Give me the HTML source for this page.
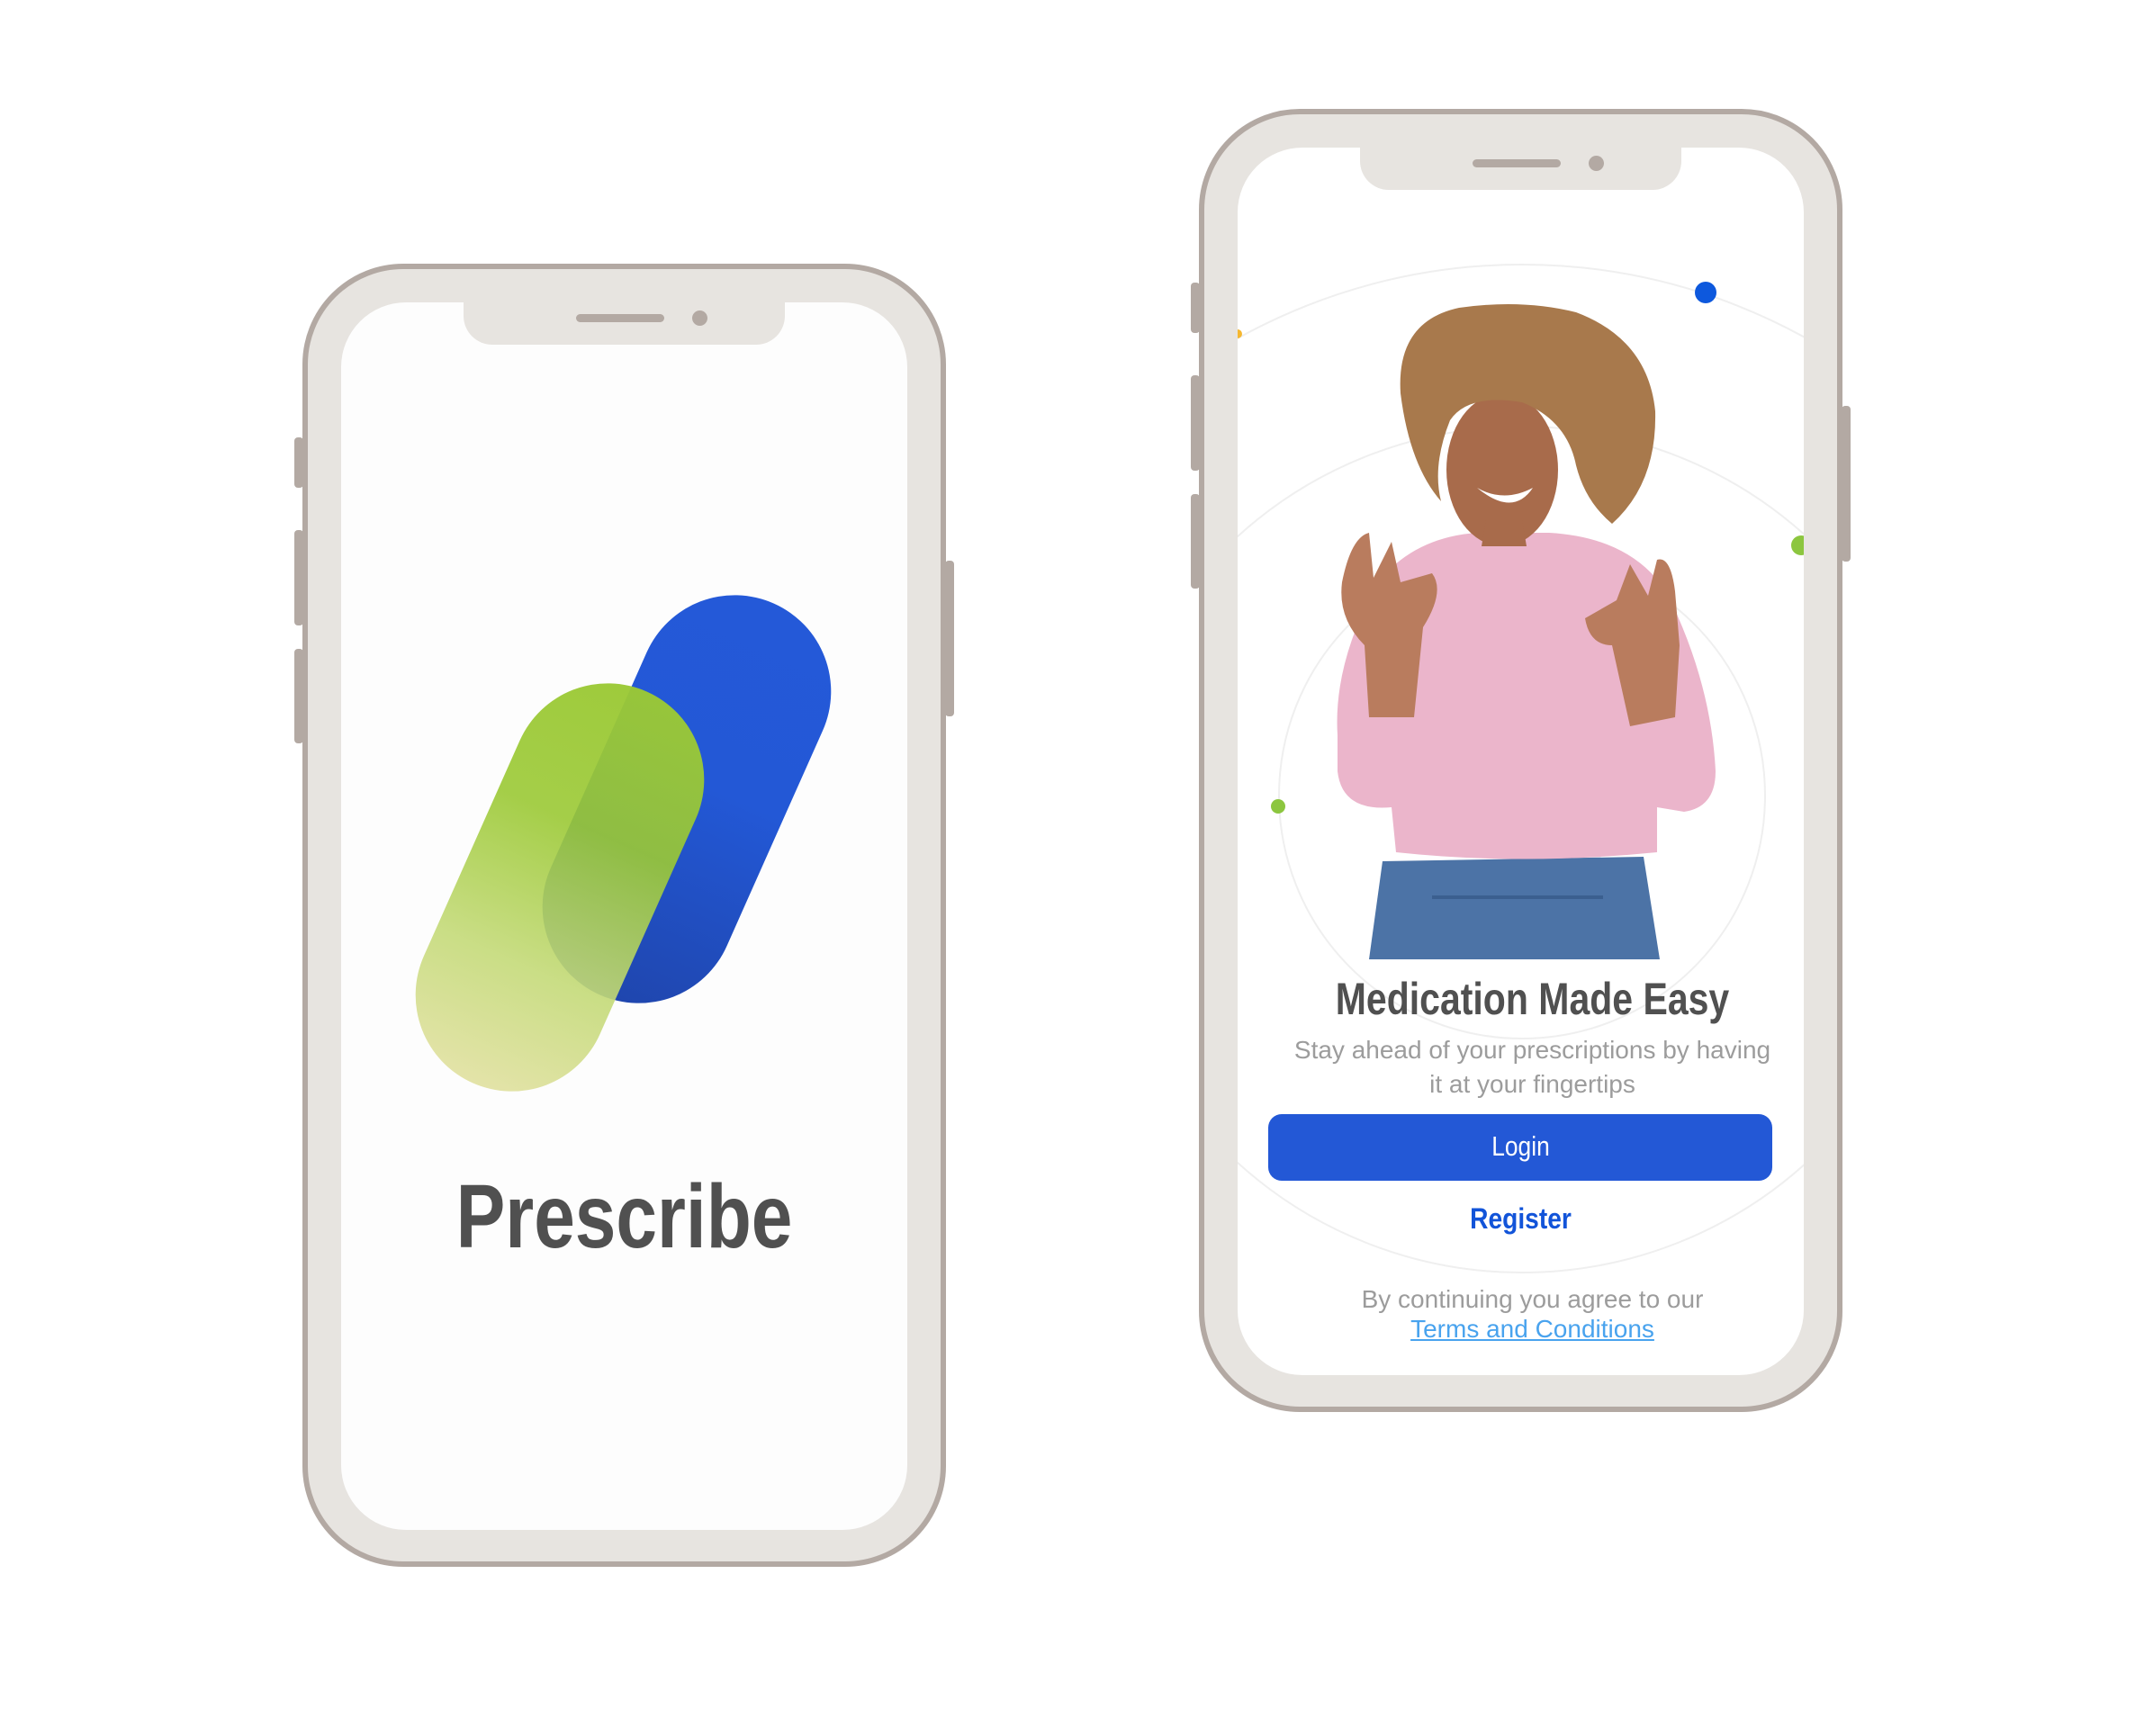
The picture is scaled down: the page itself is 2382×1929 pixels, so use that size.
<!DOCTYPE html>
<html><head><meta charset="utf-8"><style>
*{margin:0;padding:0;box-sizing:border-box}
body{width:2382px;height:1929px;background:#fff;position:relative;overflow:hidden;font-family:"Liberation Sans",sans-serif}
.abs{position:absolute}
.phone{position:absolute;width:715px;height:1448px;border:6px solid #B3A9A3;border-radius:112px;background:#E7E4E0}
.screen{position:absolute;left:37px;top:37px;width:629px;height:1364px;border-radius:72px;background:#FDFDFD;overflow:hidden}
.notch{position:absolute;left:136px;top:0;width:357px;height:47px;background:#E7E4E0;border-radius:0 0 32px 32px}
.spk{position:absolute;left:125px;top:13px;width:98px;height:9px;border-radius:5px;background:#B3A9A3}
.cam{position:absolute;left:254px;top:9px;width:17px;height:17px;border-radius:50%;background:#B3A9A3}
.btn{position:absolute;width:10px;background:#B3A9A3;border-radius:4px}
.t{position:absolute;left:0;width:629px;text-align:center;white-space:nowrap}
</style></head><body>

<div class="btn" style="left:327px;top:486px;height:56px"></div>
<div class="btn" style="left:327px;top:589px;height:106px"></div>
<div class="btn" style="left:327px;top:721px;height:105px"></div>
<div class="btn" style="left:1050px;top:623px;height:173px"></div>
<div class="phone" style="left:336px;top:293px">
  <div class="screen">
    <div class="notch"><div class="spk"></div><div class="cam"></div></div>
  </div>
</div>
<div class="abs" style="left:656px;top:650px;width:214px;height:476px;border-radius:107px;background:linear-gradient(180deg,#2459D8 0%,#2358D6 45%,#1F46AE 100%);transform:rotate(24deg)"></div>
<div class="abs" style="left:515px;top:748px;width:214px;height:476px;border-radius:107px;background:linear-gradient(180deg,rgba(155,201,53,0.97) 0%,rgba(155,201,53,0.9) 35%,rgba(196,218,120,0.9) 70%,rgba(226,226,164,0.95) 100%);transform:rotate(24deg)"></div>
<div class="abs" style="left:336px;top:1297px;width:715px;text-align:center;font-weight:bold;font-size:100px;color:#505050;transform:scaleX(0.82);line-height:110px">Prescribe</div>

<div class="btn" style="left:1323px;top:314px;height:56px"></div>
<div class="btn" style="left:1323px;top:417px;height:106px"></div>
<div class="btn" style="left:1323px;top:549px;height:105px"></div>
<div class="btn" style="left:2046px;top:451px;height:173px"></div>
<div class="phone" style="left:1332px;top:121px">
  <div class="screen" style="background:#fff">
    <svg class="abs" style="left:0;top:0" width="629" height="1364">
      <g fill="none" stroke="#EFEFEF" stroke-width="2">
        <circle cx="316" cy="780" r="650"/>
        <circle cx="316" cy="780" r="470"/>
        <circle cx="316" cy="720" r="270"/>
      </g>
      <circle cx="520" cy="161" r="12" fill="#0D58DD"/>
      <circle cx="0" cy="207" r="5" fill="#F5B731"/>
      <circle cx="626" cy="442" r="11" fill="#8CC63F"/>
      <circle cx="45" cy="732" r="8" fill="#8CC63F"/>
      <g transform="translate(-1384,-167)">
        <path d="M1530 1069 L1545 960 L1835 955 L1853 1069 Z" fill="#4C73A6"/>
        <path d="M1600 1000 L1790 1000" stroke="#3b5f8f" stroke-width="4"/>
        <path d="M1495 820 Q1490 740 1540 650 Q1580 600 1650 595 L1730 595 Q1820 600 1860 660 Q1910 760 1915 860 Q1915 900 1880 905 L1850 900 L1850 950 Q1700 965 1560 950 L1555 900 Q1500 905 1495 860 Z" fill="#EBB5CB"/>
        <ellipse cx="1678" cy="525" rx="62" ry="85" fill="#A86B4B"/>
        <path d="M1660 580 L1700 580 L1705 610 L1655 610 Z" fill="#A86B4B"/>
        <path d="M1565 440 Q1560 360 1630 345 Q1700 335 1760 350 Q1840 380 1848 460 Q1850 540 1800 585 Q1770 560 1760 520 Q1750 470 1700 450 Q1640 440 1620 470 Q1600 520 1610 560 Q1575 520 1565 440 Z" fill="#A8794C"/>
        <path d="M1650 545 Q1680 562 1712 545 Q1690 578 1650 545 Z" fill="#fff"/>
        <path d="M1500 650 Q1510 600 1530 595 L1535 645 L1555 605 L1565 650 L1600 640 Q1615 660 1590 700 L1580 800 L1530 800 L1525 720 Q1495 690 1500 650 Z" fill="#B97C5E"/>
        <path d="M1870 660 Q1865 620 1850 625 L1840 665 L1820 630 L1805 670 L1770 690 Q1775 720 1800 720 L1820 810 L1870 800 L1875 720 Z" fill="#B97C5E"/>
      </g>
    </svg>
    <div class="notch"><div class="spk"></div><div class="cam"></div></div>
    <div class="t" style="left:13px;top:918px;font-size:50px;font-weight:bold;color:#505050;transform:scaleX(0.82);line-height:56px">Medication Made Easy</div>
    <div class="t" style="left:13px;top:984px;font-size:28px;color:#9C9C9C;line-height:38px">Stay ahead of your prescriptions by having<br>it at your fingertips</div>
    <div class="abs" style="left:34px;top:1074px;width:560px;height:74px;background:#2358D6;border-radius:15px"></div>
    <div class="t" style="left:0;top:1092px;font-size:31px;color:#fff;line-height:36px;transform:scaleX(0.85)">Login</div>
    <div class="t" style="left:0;top:1172px;font-size:32px;font-weight:bold;color:#1254D9;line-height:36px;transform:scaleX(0.88)">Register</div>
    <div class="t" style="left:13px;top:1263px;font-size:28px;color:#9C9C9C;line-height:33px">By continuing you agree to our<br><span style="color:#49A3EE;text-decoration:underline">Terms and Conditions</span></div>
  </div>
</div>
</body></html>
